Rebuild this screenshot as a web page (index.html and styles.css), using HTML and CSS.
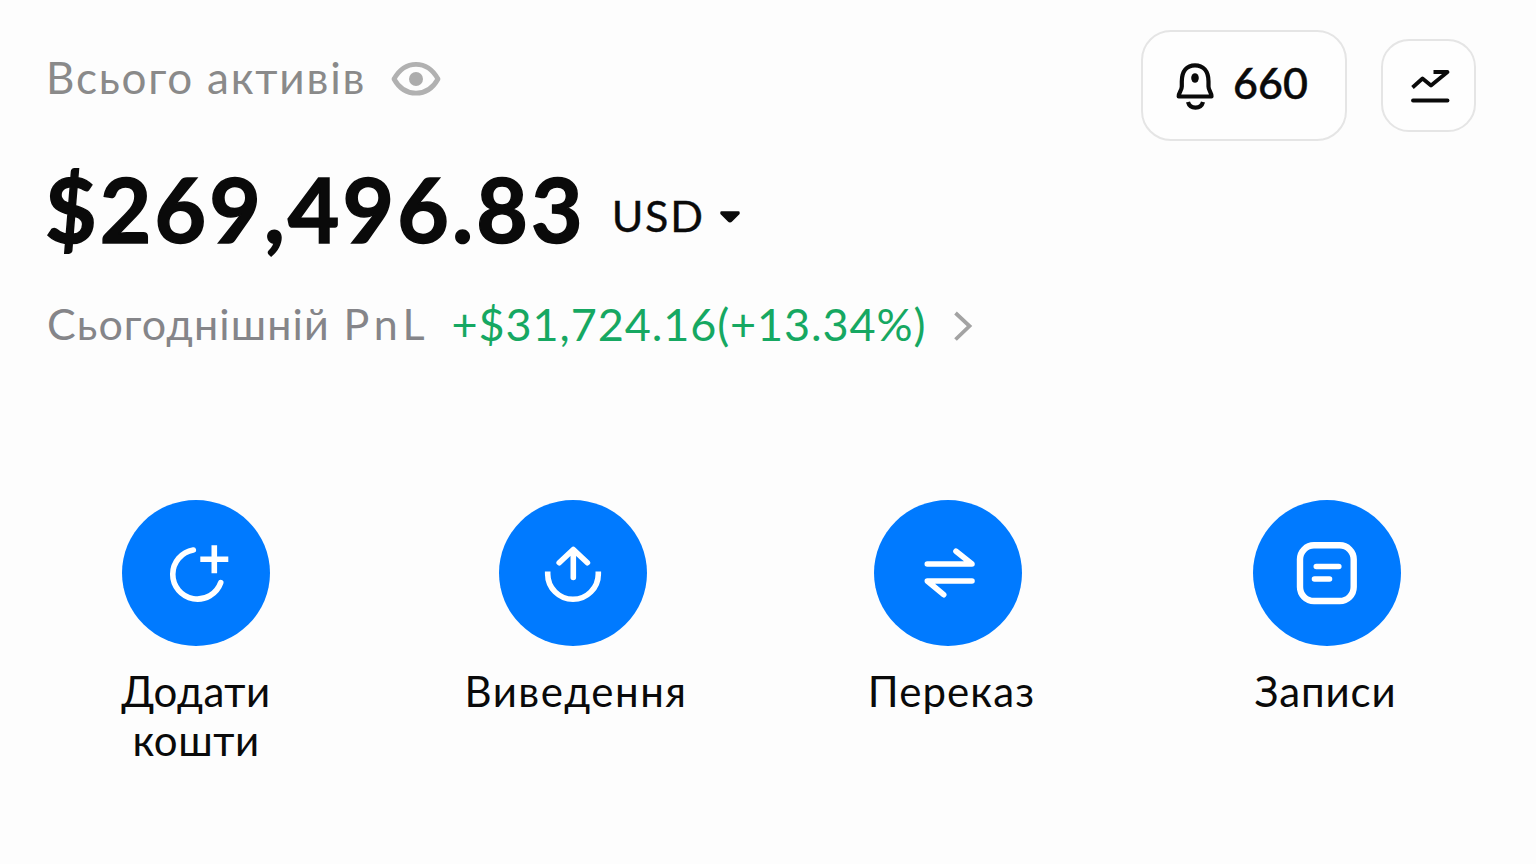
FILE: index.html
```html
<!DOCTYPE html>
<html lang="uk">

<head>
    <meta charset="UTF-8">
    <title>Активи</title>
    <link rel="stylesheet" href="styles.css">
</head>

<body>
    <div class="top">
        <!-- Balance -->
        <div class="balance">
            <div class="label-row">
                <span class="label">Всього активів</span>
                <svg class="eye" width="50" height="36" viewBox="0 0 50 36" fill="none">
                    <path d="M3 18C8 9 16 3.3 25 3.3S42 9 47 18C42 27 34 32.2 25 32.2S8 27 3 18Z" stroke="#b1b1b1" stroke-width="4.8" stroke-linejoin="round" />
                    <circle cx="25" cy="18" r="7" fill="#acacac" />
                </svg>
            </div>
            <div class="amount-row">
                <span class="amount">$269,496.83</span>
                <span class="currency">USD</span>
                <svg class="caret" width="22" height="14" viewBox="0 0 22 14">
                    <path d="M2.5 2.5H19.5V3.5L12.5 10.5Q11 12 9.5 10.5L2.5 3.5Z" fill="#0a0a0a" stroke="#0a0a0a" stroke-width="2.4" stroke-linejoin="round" />
                </svg>
            </div>
            <div class="pnl-row">
                <span class="pnl-label">Сьогоднішній <span class="pnl-name">PnL</span></span>
                <span class="pnl-value">+$31,724.16(+13.34%)</span>
                <svg class="chevron" width="20" height="32" viewBox="0 0 20 32" fill="none">
                    <path d="M2.5 3L16.5 16L2.5 29.5" stroke="#a3a3a3" stroke-width="3.8" />
                </svg>
            </div>
        </div>

        <!-- Header buttons -->
        <div class="buttons">
            <button class="bell-btn">
                <svg width="38" height="48" viewBox="0 0 38 48" fill="none" stroke="#0a0a0a" stroke-width="4.2">
                    <path d="M5.8 19.5C5.8 9 11 3.3 19 3.3S32.5 9 32.5 19.5V24.5C32.5 28.5 35.5 30 35.5 34.5H2.7C2.7 30 5.8 28.5 5.8 24.5Z" stroke-linejoin="round" />
                    <path d="M12 40C14 47.5 25 47.5 27 40" />
                    <ellipse cx="19" cy="16" rx="3.8" ry="4.8" fill="#0a0a0a" stroke="none" />
                </svg>
                <span>660</span>
            </button>
            <button class="chart-btn">
                <svg width="40" height="36" viewBox="0 0 40 36" fill="none" stroke="#0a0a0a" stroke-width="3.8">
                    <path d="M1.5 18.5L11.5 9.5L20 16.5L36.5 3H22.5" stroke-linejoin="round" />
                    <path d="M2 31.5H36.5" stroke-linecap="round" />
                </svg>
            </button>
        </div>
    </div>

    <!-- Actions -->
    <div class="actions">
        <div class="action">
            <svg class="circle" viewBox="0 0 148 146">
                <path d="M71.3 50A24.7 24.7 0 1 0 98.7 82.7" stroke-linecap="round" />
                <path d="M78.3 59.3H106.3M92.3 45.3V73.3" />
            </svg>
            <span class="add-text">Додати кошти</span>
        </div>
        <div class="action">
            <svg class="circle" viewBox="0 0 148 146">
                <path d="M48.7 71.5V74A25.3 25.3 0 0 0 99.3 74V71.5" />
                <path d="M60.2 62.7L74.3 49.5L88.4 62.7M74.3 50V77.5" stroke-linecap="round" stroke-linejoin="round" />
            </svg>
            <span class="withdraw-text">Виведення</span>
        </div>
        <div class="action">
            <svg class="circle" viewBox="0 0 148 146">
                <path d="M53.3 64H98L82 51.2M98 81H53.3L69.7 94.7" stroke-linecap="round" stroke-linejoin="round" />
            </svg>
            <span class="transfer-text">Переказ</span>
        </div>
        <div class="action">
            <svg class="circle" viewBox="0 0 148 146">
                <rect x="47" y="45.3" width="53.7" height="55.7" rx="14" stroke-width="6.4" />
                <path d="M63.3 66.5H85.8M61.5 79H76.5" stroke-linecap="round" />
            </svg>
            <span class="records-text">Записи</span>
        </div>
    </div>
</body>

</html>
```
FILE: styles.css
```css
* {
    box-sizing: border-box;
}

body {
    font-family: 'Lato', 'Noto Sans', sans-serif;
    background-color: #fdfdfd;
    color: #0a0a0a;
    margin: 0;
    height: 864px;
    overflow: hidden;
}

svg {
    display: block;
    flex-shrink: 0;
}

.top {
    display: flex;
    justify-content: space-between;
    align-items: flex-start;
    height: 500px;
    padding: 30px 60px 0 46px;
}

.label-row,
.amount-row,
.pnl-row {
    display: flex;
    align-items: center;
    white-space: nowrap;
}

.label-row {
    height: 98px;
}

.label {
    font-size: 44px;
    letter-spacing: 1.8px;
    color: #8a8a8a;
    padding-bottom: 4px;
}

.eye {
    margin-left: 25px;
}

.amount-row {
    height: 166px;
}

.amount {
    font-size: 89px;
    font-weight: bold;
    letter-spacing: 3.1px;
    -webkit-text-stroke: 1.5px #0a0a0a;
    padding-bottom: 6px;
    margin-left: -1px;
}

.currency {
    font-size: 43px;
    letter-spacing: 1.8px;
    -webkit-text-stroke: 0.4px #0a0a0a;
    margin-left: 26px;
    padding-top: 8px;
}

.caret {
    margin-left: 14px;
    margin-top: 12px;
}

.pnl-row {
    height: 64px;
}

.pnl-label {
    font-size: 43px;
    letter-spacing: 1.1px;
    word-spacing: 1.5px;
    color: #858589;
    padding-left: 1px;
    padding-bottom: 5px;
}

.pnl-name {
    letter-spacing: 5px;
}

.pnl-value {
    font-size: 45px;
    letter-spacing: 0.9px;
    color: #16a862;
    margin-left: 22px;
    padding-bottom: 5px;
}

.chevron {
    margin-left: 27px;
}

.buttons {
    display: flex;
    align-items: center;
    gap: 34px;
}

.buttons button {
    display: flex;
    align-items: center;
    justify-content: center;
    padding: 0;
    background: #fefefe;
    border: 2px solid #e5e5e5;
    font-family: inherit;
    color: #0a0a0a;
}

.buttons .bell-btn {
    width: 206px;
    height: 111px;
    border-radius: 30px;
    gap: 19px;
    padding-right: 4px;
}

.bell-btn span {
    font-size: 43px;
    font-weight: 500;
    -webkit-text-stroke: 0.5px #0a0a0a;
    padding-bottom: 6px;
}

.buttons .chart-btn {
    width: 95px;
    height: 93px;
    border-radius: 28px;
    padding: 2px 0 0 4px;
}

.actions {
    display: grid;
    grid-template-columns: 376px 377px 374px 384px;
    padding-left: 8px;
}

.action {
    display: flex;
    flex-direction: column;
    align-items: center;
    font-size: 42px;
    line-height: 49px;
    text-align: center;
}

.circle {
    width: 148px;
    height: 146px;
    background: #007aff;
    border-radius: 50%;
    margin-bottom: 21px;
    fill: none;
    stroke: #fff;
    stroke-width: 5.6;
}

.add-text {
    width: 170px;
    letter-spacing: 0.5px;
}

.withdraw-text {
    letter-spacing: 1.5px;
    padding-left: 7px;
}

.transfer-text {
    letter-spacing: 1.1px;
    padding-left: 7px;
}

.records-text {
    letter-spacing: 0.9px;
    padding-right: 3px;
}
```
